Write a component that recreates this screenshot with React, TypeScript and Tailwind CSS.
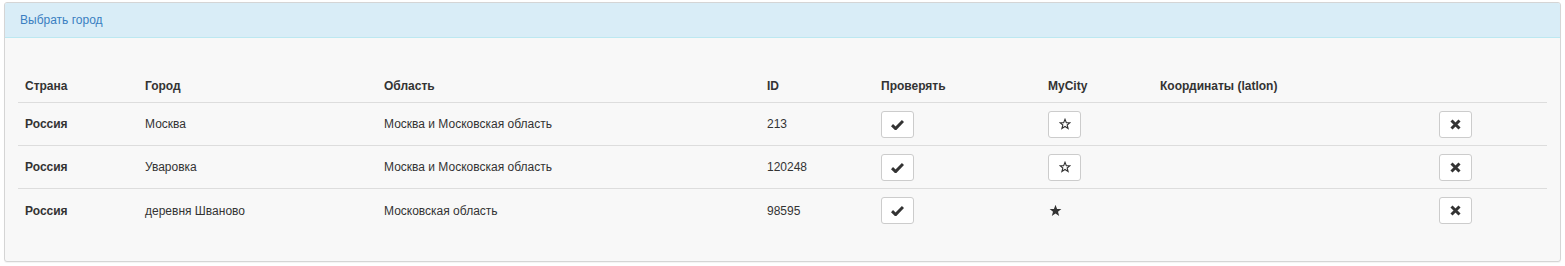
import React from "react";

const cols = "grid grid-cols-[119px_239px_383px_114px_167px_112px_279px_115px]";

function Check() {
  return (
    <svg width="13" height="11" viewBox="0 0 13 11">
      <path d="M1 6.2 L4.6 9.6 L12 2" fill="none" stroke="#333" strokeWidth="3" strokeLinejoin="miter" />
    </svg>
  );
}
function StarEmpty() {
  return (
    <svg width="12" height="12" viewBox="0 0 24 24">
      <path d="M12 2.5 L14.7 9.2 L21.8 9.5 L16.3 14 L18.2 21 L12 17 L5.8 21 L7.7 14 L2.2 9.5 L9.3 9.2 Z" fill="none" stroke="#333" strokeWidth="2.2" strokeLinejoin="miter" />
    </svg>
  );
}
function StarFull() {
  return (
    <svg width="13" height="13" viewBox="0 0 24 24">
      <path d="M12 1.5 L14.9 9 L22.8 9.3 L16.6 14.2 L18.8 22 L12 17.5 L5.2 22 L7.4 14.2 L1.2 9.3 L9.1 9 Z" fill="#333" />
    </svg>
  );
}
function Remove() {
  return (
    <svg width="11" height="11" viewBox="0 0 11 11">
      <path d="M1.5 1.5 L9.5 9.5 M9.5 1.5 L1.5 9.5" stroke="#333" strokeWidth="3" />
    </svg>
  );
}

function Btn({ children }: { children: React.ReactNode }) {
  return (
    <button className="w-[33px] h-[27px] flex items-center justify-center bg-white border border-[#ccc] rounded-[3px]">
      {children}
    </button>
  );
}

const rows = [
  { country: "Россия", city: "Москва", region: "Москва и Московская область", id: "213", my: false },
  { country: "Россия", city: "Уваровка", region: "Москва и Московская область", id: "120248", my: false },
  { country: "Россия", city: "деревня Шваново", region: "Московская область", id: "98595", my: true },
];

export default function App() {
  return (
    <div className="w-[1565px] h-[266px] bg-white pt-[2px] pl-[4px] pr-[4px]" style={{ fontFamily: '"Liberation Sans", Arial, sans-serif' }}>
      <div className="w-[1557px] h-[260px] border border-[#d5d5d5] rounded-[3px] bg-[#f8f8f8] shadow-[0_1px_1px_rgba(0,0,0,0.05)] overflow-hidden">
        <div className="h-[35px] bg-[#d9edf7] border-b border-[#bce8f1] px-[15px] flex items-center text-[12px] text-[#3a7fc1]">
          Выбрать город
        </div>
        <div className="pt-[31px] px-[13px] text-[12px] text-[#333]">
          <div className={`${cols} h-[34px] items-center border-b border-[#ddd] font-bold`}>
            <div className="px-[7px]">Страна</div>
            <div className="px-[8px]">Город</div>
            <div className="px-[8px]">Область</div>
            <div className="px-[8px]">ID</div>
            <div className="px-[8px]">Проверять</div>
            <div className="px-[8px]">MyCity</div>
            <div className="px-[8px]">Координаты (latlon)</div>
            <div></div>
          </div>
          {rows.map((r, i) => (
            <div key={i} className={`${cols} h-[43px] items-center ${i < rows.length - 1 ? "border-b border-[#ddd]" : ""}`}>
              <div className="px-[7px] font-bold">{r.country}</div>
              <div className="px-[8px]">{r.city}</div>
              <div className="px-[8px]">{r.region}</div>
              <div className="px-[8px]">{r.id}</div>
              <div className="px-[8px]"><Btn><Check /></Btn></div>
              <div className="px-[8px]">
                {r.my ? (
                  <div className="pl-[1px] flex"><StarFull /></div>
                ) : (
                  <Btn><StarEmpty /></Btn>
                )}
              </div>
              <div></div>
              <div className="px-[8px]"><Btn><Remove /></Btn></div>
            </div>
          ))}
        </div>
      </div>
    </div>
  );
}
